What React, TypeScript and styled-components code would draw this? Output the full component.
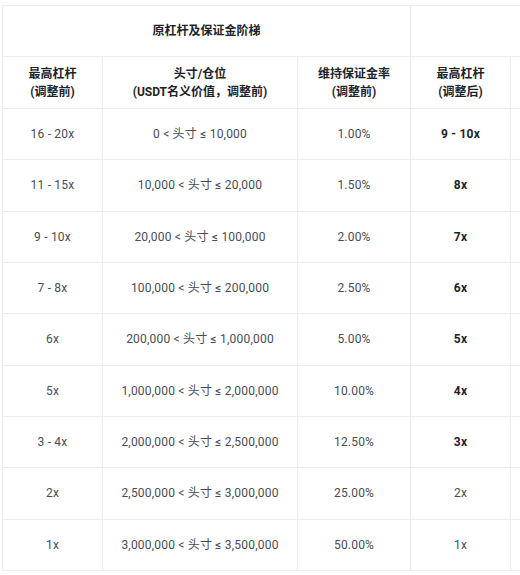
import React from 'react';
import styled, { createGlobalStyle } from 'styled-components';

const GlobalStyle = createGlobalStyle`
  html, body {
    margin: 0;
    padding: 0;
    background: #fff;
    overflow: hidden;
  }
  body {
    font-family: Roboto, "Noto Sans CJK SC", sans-serif;
  }
`;

const Wrap = styled.div`
  padding: 5px 0 0 2px;
  width: 640px;
`;

const Table = styled.table`
  border-collapse: collapse;
  table-layout: fixed;
  width: 609px;
  font-size: 12px;
  color: #474d57;
`;

const HeadCell = styled.th<{ $tall?: boolean }>`
  border: 1px solid #eaecef;
  height: ${({ $tall }) => ($tall ? 51 : 50)}px;
  padding: 0 6px;
  text-align: center;
  vertical-align: middle;
  font-weight: 700;
  color: #1e2329;
  line-height: 18px;
`;

const Cell = styled.td<{ $strong?: boolean }>`
  border: 1px solid #eaecef;
  height: 50.33px;
  padding: 0 6px;
  text-align: center;
  vertical-align: middle;
  line-height: 18px;
  letter-spacing: 0.2px;
  white-space: nowrap;
  font-weight: ${({ $strong }) => ($strong ? 700 : 400)};
  color: ${({ $strong }) => ($strong ? '#1e2329' : '#474d57')};
`;

type Row = {
  before: string;
  from: string;
  to: string;
  rate: string;
  after: string;
  strong: boolean;
};

const rows: Row[] = [
  { before: '16 - 20x', from: '0', to: '10,000', rate: '1.00%', after: '9 - 10x', strong: true },
  { before: '11 - 15x', from: '10,000', to: '20,000', rate: '1.50%', after: '8x', strong: true },
  { before: '9 - 10x', from: '20,000', to: '100,000', rate: '2.00%', after: '7x', strong: true },
  { before: '7 - 8x', from: '100,000', to: '200,000', rate: '2.50%', after: '6x', strong: true },
  { before: '6x', from: '200,000', to: '1,000,000', rate: '5.00%', after: '5x', strong: true },
  { before: '5x', from: '1,000,000', to: '2,000,000', rate: '10.00%', after: '4x', strong: true },
  { before: '3 - 4x', from: '2,000,000', to: '2,500,000', rate: '12.50%', after: '3x', strong: true },
  { before: '2x', from: '2,500,000', to: '3,000,000', rate: '25.00%', after: '2x', strong: false },
  { before: '1x', from: '3,000,000', to: '3,500,000', rate: '50.00%', after: '1x', strong: false },
];

const App: React.FC = () => {
  return (
    <Wrap>
      <GlobalStyle />
      <Table>
        <colgroup>
          <col style={{ width: 100 }} />
          <col style={{ width: 195 }} />
          <col style={{ width: 113 }} />
          <col style={{ width: 100 }} />
          <col style={{ width: 100 }} />
        </colgroup>
        <thead>
          <tr>
            <HeadCell colSpan={3}>原杠杆及保证金阶梯</HeadCell>
            <HeadCell colSpan={2}></HeadCell>
          </tr>
          <tr>
            <HeadCell $tall>最高杠杆<br />(调整前)</HeadCell>
            <HeadCell $tall>头寸/仓位<br />(USDT名义价值，调整前)</HeadCell>
            <HeadCell $tall>维持保证金率<br />(调整前)</HeadCell>
            <HeadCell $tall>最高杠杆<br />(调整后)</HeadCell>
            <HeadCell $tall></HeadCell>
          </tr>
        </thead>
        <tbody>
          {rows.map((r) => (
            <tr key={r.before}>
              <Cell>{r.before}</Cell>
              <Cell>{r.from} &lt; 头寸 ≤ {r.to}</Cell>
              <Cell>{r.rate}</Cell>
              <Cell $strong={r.strong}>{r.after}</Cell>
              <Cell></Cell>
            </tr>
          ))}
        </tbody>
      </Table>
    </Wrap>
  );
};

export default App;
